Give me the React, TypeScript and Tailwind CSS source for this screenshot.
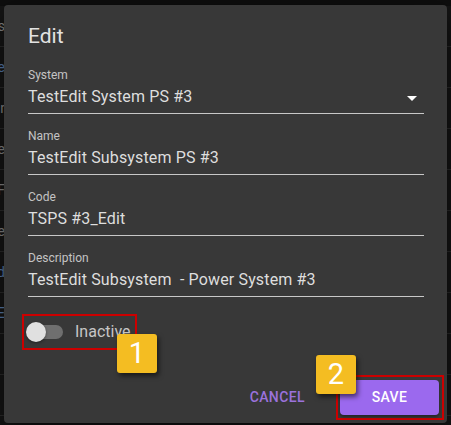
const ROWS = [
  { ch: "s", cls: "text-[#8a8a8a]" },
  { ch: "re", cls: "text-[#5b7fb0]" },
  { ch: "r", cls: "text-[#8a8a8a]" },
  { ch: "e", cls: "text-[#8a8a8a]" },
  { ch: "F", cls: "text-[#8a8a8a]" },
  { ch: "e", cls: "text-[#8a8a8a]" },
  { ch: "d", cls: "text-[#5b7fb0]" },
  { ch: "E", cls: "text-[#5b7fb0]" },
  { ch: "", cls: "" },
  { ch: "", cls: "" },
];

const FIELDS = [
  { label: "System", value: "TestEdit System PS #3", select: true },
  { label: "Name", value: "TestEdit Subsystem PS #3" },
  { label: "Code", value: "TSPS #3_Edit" },
  { label: "Description", value: "TestEdit Subsystem  - Power System #3" },
];

function Badge({ n, className }: { n: string; className: string }) {
  return (
    <div
      className={`absolute w-[40px] h-[39px] rounded-[3px] bg-[#f4bd22] text-white text-[29px] leading-none flex items-center justify-center shadow-[2px_3px_5px_rgba(0,0,0,0.55)] z-20 ${className}`}
    >
      {n}
    </div>
  );
}

function Field({ label, value, select }: { label: string; value: string; select?: boolean }) {
  return (
    <div className="mt-[14px] first:mt-0">
      <div className="text-[12px] leading-[16px] text-[#c4c4c4]">{label}</div>
      <div className="relative mt-[2px] pb-[4px] border-b border-[#c8c8c8]">
        <div className="text-[16px] leading-[24px] tracking-[0.15px] text-[#dedede] whitespace-pre">{value}</div>
        {select && (
          <svg className="absolute right-0 top-[1px] w-6 h-6" viewBox="0 0 24 24" fill="#ffffff">
            <path d="M7 10l5 5 5-5z" />
          </svg>
        )}
      </div>
    </div>
  );
}

export default function App() {
  return (
    <div
      className="relative w-[451px] h-[425px] overflow-hidden bg-[#151515]"
      style={{ fontFamily: "Roboto, 'Liberation Sans', sans-serif" }}
    >
      {/* table behind the dialog */}
      <div className="h-[6px] bg-[#0e0e0e]" />
      {ROWS.map((r, i) => (
        <div key={i} className="h-[41px] border-b border-[#2b2b2b] flex items-center">
          <div className="w-[5px] overflow-hidden flex justify-end">
            <span className={`whitespace-nowrap text-[14px] ${r.cls}`}>{r.ch}</span>
          </div>
        </div>
      ))}

      {/* dialog */}
      <div className="absolute left-[4px] top-[5px] w-[443px] h-[418px] rounded-[4px] bg-[#383838] shadow-[0_10px_30px_rgba(0,0,0,0.6)] flex flex-col pl-[24px] pr-[23px] pt-[15px] pb-[3px]">
        <h2 className="text-[21px] leading-[32px] font-normal text-[#e2e2e2]">Edit</h2>

        <div className="mt-[15px]">
          {FIELDS.map((f) => (
            <Field key={f.label} {...f} />
          ))}
        </div>

        <div className="mt-[17px] ml-[-6px] w-[115px] h-[36px] border-2 border-[#cc0000] flex items-center">
          <div className="relative ml-[2px] w-[37px] h-[20px]">
            <div className="absolute left-[3px] top-[3px] w-[34px] h-[14px] rounded-full bg-[#6f6f6f]" />
            <div className="absolute left-0 top-0 w-[20px] h-[20px] rounded-full bg-[#e0e0e0] shadow-[0_1px_3px_rgba(0,0,0,0.4)]" />
          </div>
          <span className="ml-[12px] text-[16px] leading-[24px] text-[#c6c6c6]">Inactive</span>
        </div>

        <div className="mt-auto flex items-center justify-end mr-[-20px]">
          <span className="mr-[31px] text-[14px] font-medium tracking-[0.4px] text-[#9b72dc]">CANCEL</span>
          <div className="border-2 border-[#cc0000] pl-[2px] pr-[3px] py-[3px]">
            <div className="w-[99px] h-[35px] rounded-[4px] bg-[#9b69ee] flex items-center justify-center text-[14px] font-medium tracking-[0.4px] text-white shadow-[0_2px_3px_rgba(0,0,0,0.35)]">
              SAVE
            </div>
          </div>
        </div>
      </div>

      <Badge n="1" className="left-[117px] top-[334px]" />
      <Badge n="2" className="left-[316px] top-[355px]" />
    </div>
  );
}
